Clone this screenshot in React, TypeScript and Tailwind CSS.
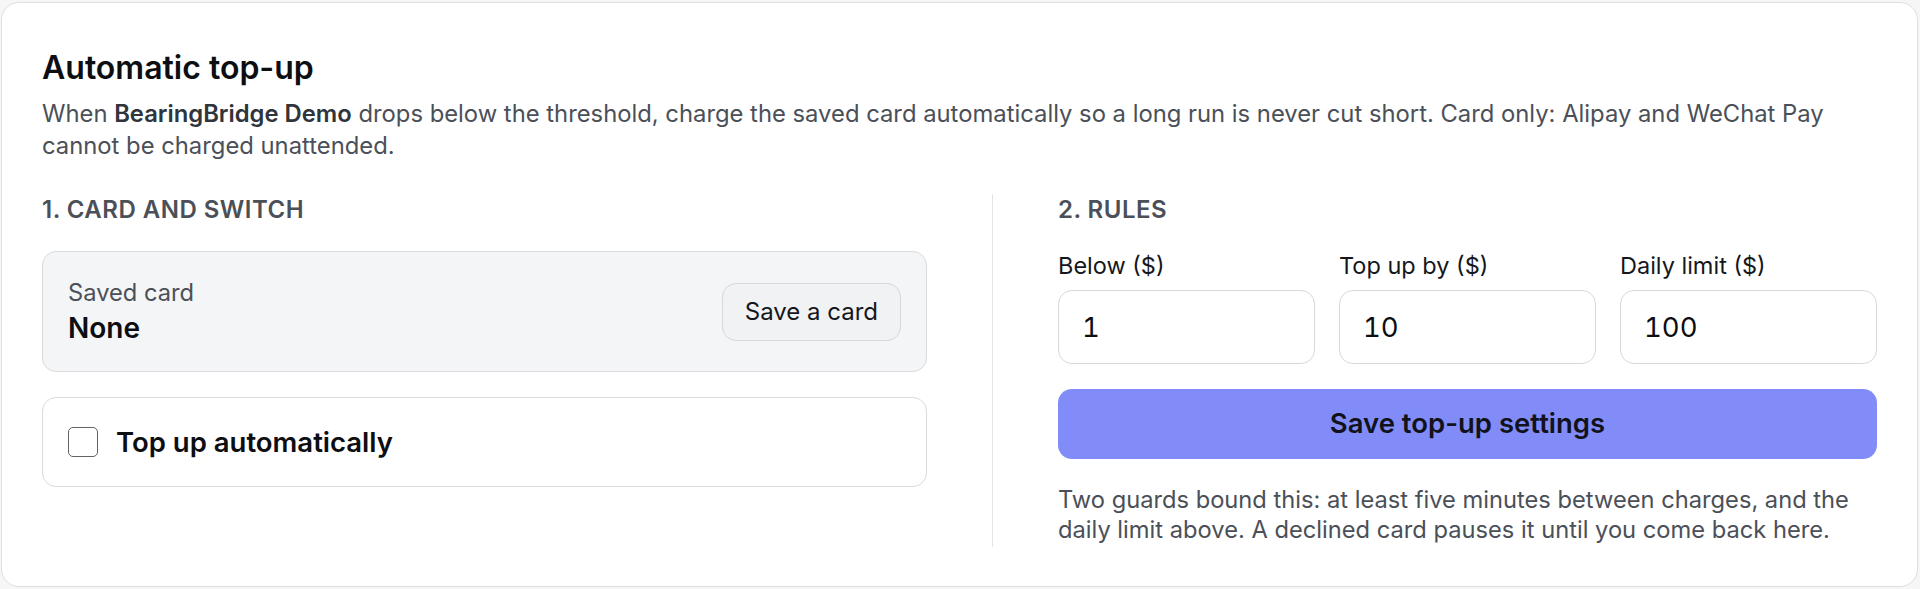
const fields = [
  { label: "Below ($)", value: "1" },
  { label: "Top up by ($)", value: "10" },
  { label: "Daily limit ($)", value: "100" },
];

const App = () => {
  return (
    <div className="min-h-screen bg-[#f6f6f7] pl-[1px] pr-[2px] pt-[2px] font-['Inter',sans-serif]">
      <div className="rounded-[18px] border border-[#dedfe2] bg-white px-[40px] pt-[45px] pb-[39px]">
        <h2 className="text-[32px] leading-[39px] font-semibold text-[#0d0e12]">
          Automatic top-up
        </h2>
        <p className="mt-[11px] text-[23.8px] leading-[32px] text-[#4b5058]">
          When <span className="font-semibold text-[#30343b]">BearingBridge Demo</span> drops
          below the threshold, charge the saved card automatically so a long run is never cut
          short. Card only: Alipay and WeChat Pay cannot be charged unattended.
        </p>

        <div className="mt-[32px] grid grid-cols-[950px_1fr]">
          {/* left: card + switch */}
          <div className="pr-[65px]">
            <div className="text-[24px] leading-[32px] font-semibold uppercase tracking-[0.02em] text-[#4b5058]">
              1. Card and switch
            </div>

            <div className="mt-[25px] flex h-[121px] items-center justify-between rounded-[14px] border border-[#d9dbde] bg-[#f4f5f7] px-[25px]">
              <div>
                <div className="text-[23.7px] leading-[30px] text-[#4b5058]">Saved card</div>
                <div className="mt-[3px] text-[28px] leading-[34px] font-semibold text-[#0d0e12]">
                  None
                </div>
              </div>
              <button className="h-[58px] rounded-[14px] border border-[#d6d8dc] bg-[#f1f2f4] px-[22px] text-[24px] leading-[30px] text-[#15171c]">
                Save a card
              </button>
            </div>

            <label className="mt-[25px] flex h-[90px] items-center gap-[18px] rounded-[14px] border border-[#d9dbde] bg-white px-[25px]">
              <input
                type="checkbox"
                className="h-[30px] w-[30px] appearance-none rounded-[5px] border-[1.5px] border-[#5f6368] bg-white"
              />
              <span className="text-[27.5px] leading-[34px] font-semibold text-[#0d0e12]">
                Top up automatically
              </span>
            </label>
          </div>

          {/* right: rules */}
          <div className="border-l border-[#e2e3e5] pl-[65px] pb-[2px]">
            <div className="text-[24px] leading-[32px] font-semibold uppercase tracking-[0.02em] text-[#4b5058]">
              2. Rules
            </div>

            <div className="mt-[24px] grid grid-cols-3 gap-[24px]">
              {fields.map((f) => (
                <div key={f.label}>
                  <div className="text-[23.5px] leading-[31px] text-[#15171c]">{f.label}</div>
                  <input
                    defaultValue={f.value}
                    className="mt-[9px] h-[74px] w-full rounded-[14px] border border-[#d6d8dc] bg-white px-[23px] text-[27.5px] tabular-nums text-[#0d0e12] outline-none"
                  />
                </div>
              ))}
            </div>

            <button className="mt-[25px] h-[70px] w-full rounded-[14px] bg-[#818cf8] text-[27.5px] font-semibold text-[#12131a]">
              Save top-up settings
            </button>

            <p className="mt-[26px] text-[23.7px] leading-[30px] text-[#4b5058]">
              Two guards bound this: at least five minutes between charges, and the daily limit
              above. A declined card pauses it until you come back here.
            </p>
          </div>
        </div>
      </div>
    </div>
  );
};

export default App;
